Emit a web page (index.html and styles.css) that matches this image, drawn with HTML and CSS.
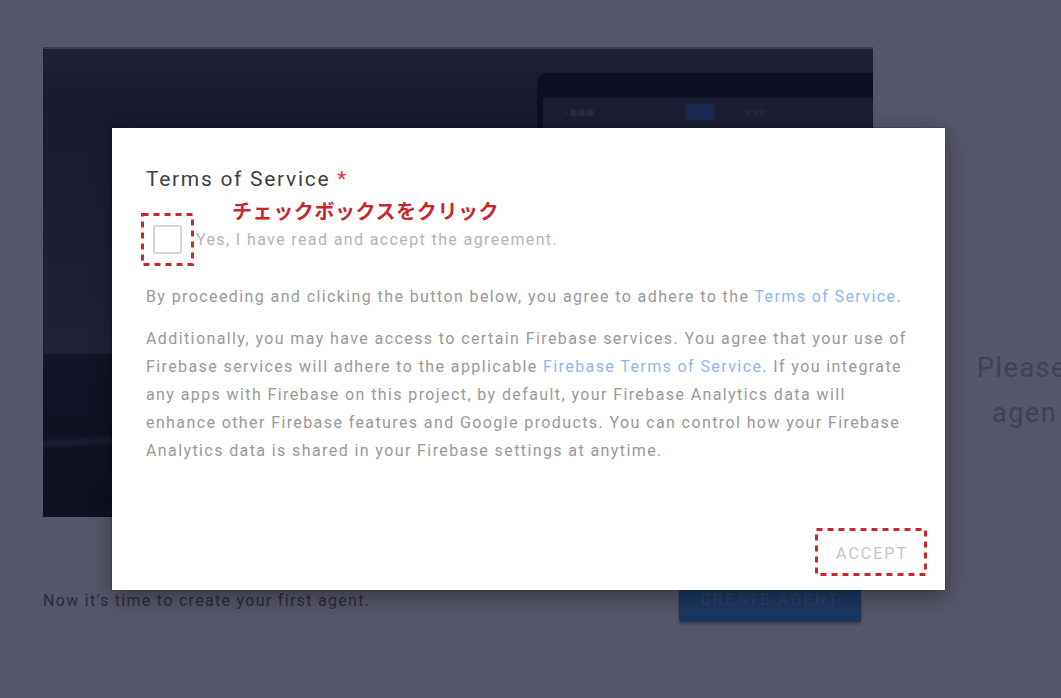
FILE: index.html
```html
<!DOCTYPE html>
<html lang="ja">
<head>
<meta charset="utf-8">
<link rel="stylesheet" href="styles.css">
</head>
<body>
<div class="page">
  <main class="main">
    <div class="hero">
      <div class="hero-band"></div>
      <div class="hero-streak"></div>
      <div class="laptop">
        <div class="laptop-screen">
          <div class="laptop-bar">
            <span class="lb-text">• ■■■</span>
            <span class="lb-square"></span>
            <span class="lb-dim">■■■</span>
          </div>
        </div>
      </div>
    </div>
    <div class="cta-row">
      <p class="cta-text">Now it's time to create your first agent.</p>
      <button class="cta-btn">CREATE AGENT</button>
    </div>
  </main>
  <aside class="side">
    <p class="side-text"><span class="l1">Please</span><span class="l2">agen</span></p>
  </aside>
</div>

<div class="modal">
  <h2 class="modal-title">Terms of Service <span class="req">*</span></h2>
  <div class="note">チェックボックスをクリック</div>
  <div class="check-row">
    <div class="check-wrap">
      <svg class="dash" width="53" height="53" viewBox="0 0 53 53"><rect x="1.5" y="1.5" width="50" height="50" fill="none" stroke="#c8282c" stroke-width="3" stroke-dasharray="6 5"/></svg>
      <span class="checkbox"></span>
    </div>
    <span class="check-label">Yes, I have read and accept the agreement.</span>
  </div>
  <p class="para first">By proceeding and clicking the button below, you agree to adhere to the <a class="link">Terms of Service</a>.</p>
  <p class="para second">Additionally, you may have access to certain Firebase services. You agree that your use of Firebase services will adhere to the applicable <a class="link">Firebase Terms of Service</a>. If you integrate any apps with Firebase on this project, by default, your Firebase Analytics data will enhance other Firebase features and Google products. You can control how your Firebase Analytics data is shared in your Firebase settings at anytime.</p>
  <div class="actions">
    <div class="accept-wrap">
      <svg class="dash" width="112" height="48" viewBox="0 0 112 48"><rect x="1.5" y="1.5" width="109" height="45" fill="none" stroke="#c8282c" stroke-width="3" stroke-dasharray="6 5"/></svg>
      <button class="accept">ACCEPT</button>
    </div>
  </div>
</div>
</body>
</html>
```
FILE: styles.css
```css
* { box-sizing: border-box; }
html, body {
  margin: 0;
  padding: 0;
}
body {
  width: 1061px;
  height: 698px;
  overflow: hidden;
  background: #545669;
  font-family: Roboto, "Noto Sans CJK JP", sans-serif;
  position: relative;
}
.page {
  display: flex;
  height: 698px;
}
.main {
  width: 915px;
  padding: 47px 42px 0 43px;
  border-right: 1px solid #505265;
}
.hero {
  width: 830px;
  height: 470px;
  background: linear-gradient(180deg, #1f2236 0%, #181a2d 10%, #1c1f33 40%, #1f2236 64%);
  position: relative;
  overflow: hidden;
  border-top: 2px solid #3a3c51;
}
.hero-band {
  position: absolute;
  left: 0;
  top: 305px;
  width: 100%;
  height: 170px;
  background: linear-gradient(180deg, #121427 0%, #0f1122 100%);
}
.hero-streak {
  position: absolute;
  left: 0;
  top: 390px;
  width: 70px;
  height: 6px;
  background: rgba(40,44,66,0.5);
  transform: rotate(-3deg);
  filter: blur(2px);
}
.laptop {
  position: absolute;
  left: 494px;
  top: 24px;
  width: 340px;
  height: 320px;
  background: #0d1024;
  border-radius: 10px 0 0 0;
  padding: 25px 0 0 6px;
}
.laptop-screen {
  height: 100%;
  background: #1b1e33;
}
.laptop-bar {
  height: 28px;
  display: flex;
  align-items: center;
  padding-left: 22px;
}
.lb-text {
  color: #282c45;
  font-size: 8px;
  font-weight: 700;
  width: 120px;
}
.lb-square {
  width: 30px;
  height: 16px;
  background: #192a50;
}
.lb-dim {
  margin-left: 30px;
  color: #22263c;
  font-size: 7px;
}
.cta-row {
  display: flex;
  justify-content: space-between;
  align-items: flex-start;
  padding-top: 70px;
  padding-right: 11px;
}
.cta-text {
  margin: 4px 0 0;
  font-size: 16px;
  letter-spacing: 1.3px;
  color: #2a2c3b;
}
.cta-btn {
  width: 182px;
  height: 35px;
  margin: 0;
  padding: 0 0 10px;
  background: #1b365e;
  border: none;
  border-radius: 2px;
  color: #2b3d5d;
  font-family: Roboto, sans-serif;
  font-size: 16px;
  font-weight: 500;
  letter-spacing: 2.2px;
  box-shadow: 0 2px 3px rgba(0,0,0,0.25);
}
.side {
  flex: 1;
  padding-top: 346px;
  padding-left: 62px;
  overflow: hidden;
}
.side-text {
  margin: 0;
  color: #3f4256;
  font-size: 27px;
  line-height: 45px;
  white-space: nowrap;
  letter-spacing: 1.5px;
}
.l1, .l2 { display: block; }
.l2 { padding-left: 15px; }

/* modal overlay */
.modal {
  position: absolute;
  left: 112px;
  top: 128px;
  width: 833px;
  height: 462px;
  background: #fff;
  box-shadow: 0 6px 20px rgba(0,0,0,0.35), 0 0 0 1px rgba(0,0,0,0.1);
  padding: 37px 34px 0 34px;
  display: flex;
  flex-direction: column;
}
.modal-title {
  margin: 0;
  font-size: 21px;
  font-weight: 400;
  color: #3f3f3f;
  line-height: 28px;
  letter-spacing: 1.7px;
}
.req { color: #e53935; }
.note {
  position: absolute;
  left: 120px;
  top: 70px;
  color: #c8282c;
  font-weight: 700;
  font-size: 20px;
  line-height: 26px;
  letter-spacing: 0.6px;
  font-family: "Noto Sans CJK JP", sans-serif;
}
.check-row {
  display: flex;
  align-items: center;
  margin-top: 20px;
  margin-left: -5px;
}
.check-wrap {
  position: relative;
  width: 53px;
  height: 53px;
  display: flex;
  align-items: center;
  justify-content: center;
}
.dash {
  position: absolute;
  left: 0;
  top: 0;
}
.checkbox {
  width: 29px;
  height: 29px;
  border: 2px solid #d6d6d6;
  border-radius: 2px;
}
.check-label {
  margin-left: 2px;
  color: #b4b4b4;
  font-size: 16px;
  letter-spacing: 1.38px;
}
.para {
  margin: 0;
  color: #999;
  font-size: 16px;
  line-height: 28px;
  letter-spacing: 1.4px;
}
.para.first { margin-top: 17px; }
.para.second { margin-top: 14px; }
.link { color: #8fb6f2; }
.actions {
  margin-top: auto;
  display: flex;
  justify-content: flex-end;
  margin-right: -16px;
  margin-bottom: 14px;
}
.accept-wrap {
  position: relative;
  width: 112px;
  height: 48px;
  display: flex;
  align-items: center;
  justify-content: center;
  padding-top: 3px;
  padding-left: 2px;
}
.accept {
  background: none;
  border: none;
  color: #c5c5c5;
  font-family: Roboto, sans-serif;
  font-size: 16px;
  letter-spacing: 2px;
  padding: 0;
}
```
